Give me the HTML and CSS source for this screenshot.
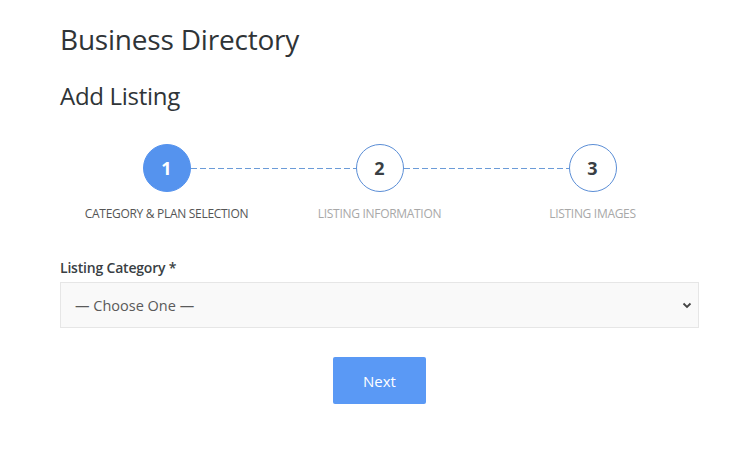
FILE: index.html
```html
<!DOCTYPE html>
<html>
<head>
<meta charset="utf-8">
<link rel="stylesheet" href="styles.css">
</head>
<body>
<div class="page">
  <h1 class="title">Business Directory</h1>
  <h2 class="subtitle">Add Listing</h2>
  <div class="steps">
    <div class="step active">
      <div class="circle">1</div>
      <div class="label">CATEGORY &amp; PLAN SELECTION</div>
    </div>
    <div class="step">
      <div class="circle">2</div>
      <div class="label">LISTING INFORMATION</div>
    </div>
    <div class="step last">
      <div class="circle">3</div>
      <div class="label">LISTING IMAGES</div>
    </div>
  </div>
  <form class="form">
    <label class="field-label">Listing Category *</label>
    <div class="select">
      <span class="select-text">— Choose One —</span>
      <svg class="chev" width="10" height="7" viewBox="0 0 10 7"><path d="M1.5 1.5 L5 5 L8.5 1.5" fill="none" stroke="#444" stroke-width="1.8"/></svg>
    </div>
    <div class="actions">
      <button type="button" class="btn">Next</button>
    </div>
  </form>
</div>
</body>
</html>
```
FILE: styles.css
```css
* { box-sizing: border-box; }
body {
  margin: 0;
  background: #fff;
  font-family: "Open Sans", "Noto Sans", sans-serif;
  color: #333;
}
.page {
  width: 639px;
  margin-left: 60px;
  padding-top: 20px;
}
.title {
  margin: 0;
  font-size: 28px;
  font-weight: 400;
  line-height: 38px;
  color: #2f3437;
  letter-spacing: -0.2px;
}
.subtitle {
  margin: 22px 0 0;
  font-size: 24px;
  font-weight: 400;
  line-height: 32px;
  color: #2f3437;
  letter-spacing: -0.3px;
}
.steps {
  display: flex;
  margin-top: 32px;
}
.step {
  flex: 1;
  display: flex;
  flex-direction: column;
  align-items: center;
  position: relative;
}
.step:not(.last)::after {
  content: "";
  position: absolute;
  top: 24px;
  left: calc(50% + 24px);
  width: calc(100% - 48px);
  height: 1px;
  background: repeating-linear-gradient(to right, #6b9bd8 0 6px, transparent 6px 9px);
}
.circle {
  width: 48px;
  height: 48px;
  border-radius: 50%;
  border: 1px solid #5b8ed6;
  display: flex;
  align-items: center;
  justify-content: center;
  font-size: 18px;
  font-weight: 700;
  color: #3a3f44;
  background: #fff;
}
.step.active .circle {
  background: #5593ee;
  border-color: #5593ee;
  color: #fff;
}
.label {
  margin-top: 13px;
  font-size: 12px;
  color: #a8a8a8;
  letter-spacing: -0.3px;
}
.step.active .label { color: #555; }
.form {
  margin-top: 37px;
}
.field-label {
  display: block;
  font-size: 14px;
  font-weight: 600;
  color: #3a3f44;
  line-height: 18px;
  letter-spacing: -0.2px;
}
.select {
  margin-top: 5px;
  height: 46px;
  border: 1px solid #e6e6e6;
  background: #f9f9f9;
  display: flex;
  align-items: center;
  justify-content: space-between;
  padding: 0 6px 0 14px;
}
.select-text {
  font-size: 14.5px;
  color: #5a5a5a;
}
.chev { display: block; }
.actions {
  display: flex;
  justify-content: center;
  margin-top: 29px;
}
.btn {
  width: 93px;
  height: 47px;
  border: none;
  border-radius: 2px;
  background: #5a99f5;
  color: #fff;
  font-family: inherit;
  font-size: 15px;
}
```
